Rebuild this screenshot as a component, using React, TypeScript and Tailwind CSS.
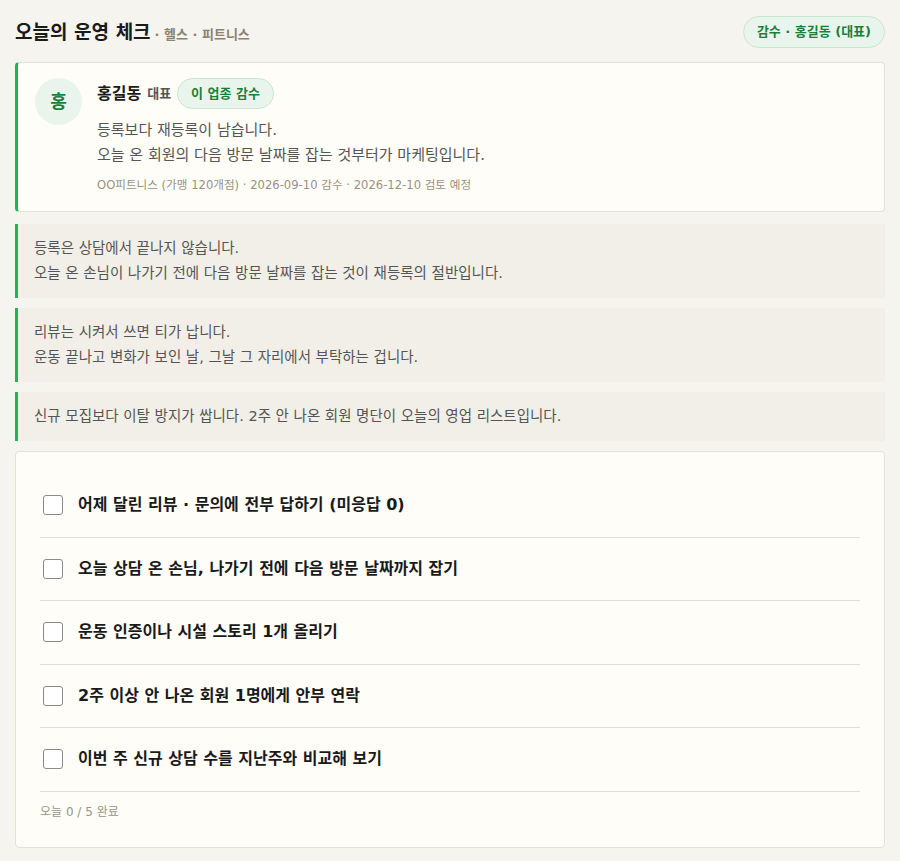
import { useState } from 'react';

const quotes: string[][] = [
  ['등록은 상담에서 끝나지 않습니다.', '오늘 온 손님이 나가기 전에 다음 방문 날짜를 잡는 것이 재등록의 절반입니다.'],
  ['리뷰는 시켜서 쓰면 티가 납니다.', '운동 끝나고 변화가 보인 날, 그날 그 자리에서 부탁하는 겁니다.'],
  ['신규 모집보다 이탈 방지가 쌉니다. 2주 안 나온 회원 명단이 오늘의 영업 리스트입니다.'],
];

const tasks = [
  '어제 달린 리뷰 · 문의에 전부 답하기 (미응답 0)',
  '오늘 상담 온 손님, 나가기 전에 다음 방문 날짜까지 잡기',
  '운동 인증이나 시설 스토리 1개 올리기',
  '2주 이상 안 나온 회원 1명에게 안부 연락',
  '이번 주 신규 상담 수를 지난주와 비교해 보기',
];

export default function App() {
  const [done, setDone] = useState<boolean[]>(tasks.map(() => false));
  const count = done.filter(Boolean).length;

  return (
    <div className="min-h-[861px] bg-[#f5f4ef] px-[15px] pt-4 pb-[14px] text-[#222] font-['DejaVu_Sans','Noto_Sans_CJK_KR',sans-serif]">
      {/* header */}
      <div className="flex items-center justify-between h-8">
        <div className="flex items-baseline gap-1">
          <h1 className="text-[19px] font-bold text-[#1a1a1a]">오늘의 운영 체크</h1>
          <span className="text-[13px] font-bold text-[#8c8270]">· 헬스 · 피트니스</span>
        </div>
        <div className="h-8 px-[13px] flex items-center rounded-full bg-[#e9f5ec] border border-[#c8e6d2] text-[13px] font-bold text-[#1a7f3c]">
          감수 · 홍길동 (대표)
        </div>
      </div>

      {/* reviewer card */}
      <div className="mt-[14px] flex gap-[15px] bg-[#fefdf8] border border-[#e4e1d6] border-l-[3px] border-l-[#1db45a] rounded-[4px] pl-[17px] pr-5 pt-[15px] pb-[17px]">
        <div className="w-[47px] h-[47px] shrink-0 rounded-full bg-[#e9f5ec] flex items-center justify-center text-[18px] font-bold text-[#1a7f3c]">
          홍
        </div>
        <div className="flex flex-col">
          <div className="flex items-center gap-[6px] h-[31px]">
            <span className="text-[16px] font-bold text-[#1a1a1a]">홍길동</span>
            <span className="text-[13px] font-bold text-[#555]">대표</span>
            <span className="h-[31px] px-[13px] flex items-center rounded-full bg-[#e9f5ec] border border-[#c8e6d2] text-[13px] font-bold text-[#1a7f3c]">
              이 업종 감수
            </span>
          </div>
          <div className="mt-[9px] text-[15px] leading-[25px] text-[#555]">
            <p>등록보다 재등록이 남습니다.</p>
            <p>오늘 온 회원의 다음 방문 날짜를 잡는 것부터가 마케팅입니다.</p>
          </div>
          <p className="mt-[8px] text-[11.6px] leading-[18px] text-[#9a9080]">
            OO피트니스 (가맹 120개점) · 2026-09-10 감수 · 2026-12-10 검토 예정
          </p>
        </div>
      </div>

      {/* quotes */}
      <div className="mt-[12px] flex flex-col gap-[10px]">
        {quotes.map((lines, i) => (
          <div key={i} className="bg-[#f1efe7] border-l-[3px] border-l-[#1db45a] pl-4 py-3 text-[14.5px] leading-[25px] text-[#555]">
            {lines.map((l) => (
              <p key={l}>{l}</p>
            ))}
          </div>
        ))}
      </div>

      {/* checklist */}
      <div className="mt-[10px] bg-[#fefdf8] border border-[#e4e1d6] rounded-[4px] px-6 pt-[22px] pb-[25px]">
        {tasks.map((t, i) => (
          <label key={t} className="flex items-center gap-[15px] py-5 border-b border-[#e2dfd6] cursor-pointer">
            <span
              className={`w-[20px] h-[20px] ml-[3px] rounded-[3px] border-[1.5px] flex items-center justify-center ${
                done[i] ? 'bg-[#1db45a] border-[#1db45a]' : 'bg-white border-[#8a8a8a]'
              }`}
            >
              {done[i] && (
                <svg width="14" height="14" viewBox="0 0 24 24" fill="none" stroke="white" strokeWidth="3">
                  <path d="M5 12l5 5 9-10" />
                </svg>
              )}
            </span>
            <input
              type="checkbox"
              className="hidden"
              checked={done[i]}
              onChange={() => setDone((p) => p.map((v, j) => (j === i ? !v : v)))}
            />
            <span className="text-[16px] leading-[22.5px] font-bold text-[#1a1a1a]">{t}</span>
          </label>
        ))}
        <p className="mt-[10px] text-[12px] leading-[20px] text-[#9a9488]">오늘 {count} / 5 완료</p>
      </div>
    </div>
  );
}
